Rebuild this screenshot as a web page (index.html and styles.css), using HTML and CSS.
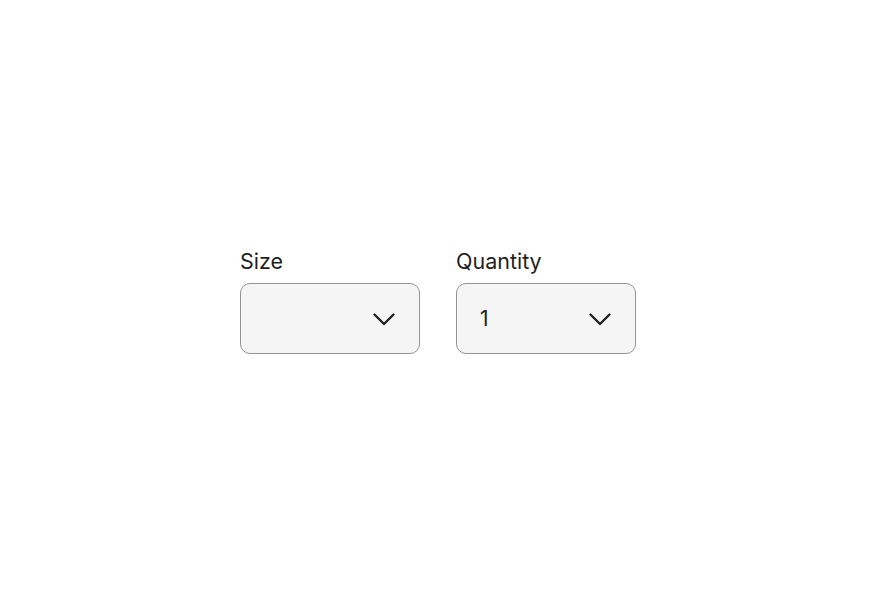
FILE: index.html
```html
<!DOCTYPE html>
<html>
<head>
<meta charset="utf-8">
<link rel="stylesheet" href="styles.css">
</head>
<body>
<div class="page">
  <div class="fields">
    <div class="field">
      <label class="label">Size</label>
      <div class="select">
        <span class="value"></span>
        <svg class="chev" width="22" height="13" viewBox="0 0 22 13"><path d="M1.5 1.5 L11 11 L20.5 1.5" fill="none" stroke="#222" stroke-width="2.4" stroke-linecap="round" stroke-linejoin="round"/></svg>
      </div>
    </div>
    <div class="field">
      <label class="label">Quantity</label>
      <div class="select">
        <span class="value">1</span>
        <svg class="chev" width="22" height="13" viewBox="0 0 22 13"><path d="M1.5 1.5 L11 11 L20.5 1.5" fill="none" stroke="#222" stroke-width="2.4" stroke-linecap="round" stroke-linejoin="round"/></svg>
      </div>
    </div>
  </div>
</div>
</body>
</html>
```
FILE: styles.css
```css
html, body {
  margin: 0;
  padding: 0;
  background: #fff;
}
.page {
  height: 600px;
  display: flex;
  align-items: center;
  justify-content: center;
  font-family: Inter, "Noto Sans", sans-serif;
  color: #222;
}
.fields {
  display: flex;
  gap: 36px;
  margin-top: 1px;
}
.field {
  display: flex;
  flex-direction: column;
  gap: 9px;
}
.label {
  font-size: 21.5px;
  line-height: 26px;
  color: #1f1f1f;
}
.select {
  box-sizing: border-box;
  width: 180px;
  height: 71px;
  border: 1.5px solid #959595;
  border-radius: 10px;
  background: #f5f5f5;
  display: flex;
  align-items: center;
  justify-content: space-between;
  padding: 0 24px 0 23px;
}
.value {
  font-size: 21px;
  color: #222;
}
.chev {
  display: block;
  margin-top: 2px;
}
```
